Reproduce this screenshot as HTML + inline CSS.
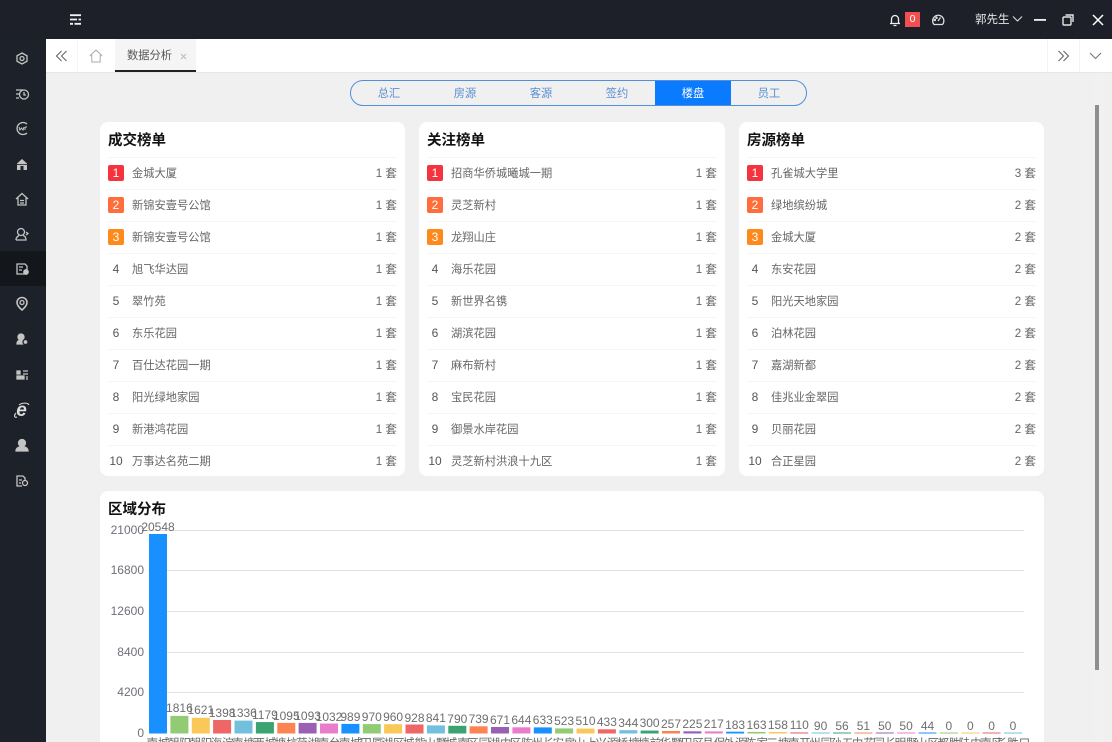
<!DOCTYPE html>
<html lang="zh">
<head>
<meta charset="utf-8">
<title>数据分析</title>
<style>
*{box-sizing:border-box;margin:0;padding:0}
html,body{width:1112px;height:742px;overflow:hidden;background:#f0f0f0}
body{position:relative;font-family:"Liberation Sans","Noto Sans CJK SC",sans-serif;color:#666;filter:blur(.3px)}
.a{position:absolute}
#top{left:0;top:0;width:1112px;height:39px;background:#1d2029}
#side{left:0;top:39px;width:46px;height:703px;background:#1d2129}
#active{left:0;top:251px;width:46px;height:35px;background:#13161b}
#tabs{left:46px;top:39px;width:1066px;height:34px;background:#fff;border-bottom:1px solid #e6e6e6}
#tab{left:115px;top:39px;width:81px;height:33px;background:#f5f5f5;border-bottom:2px solid #222}
.tt{font-size:11.25px;line-height:16px;color:#555}
#seg{left:350px;top:80px;width:457px;height:26px;border:1px solid #4f8fdc;border-radius:13px;overflow:hidden}
#seg span{position:absolute;top:0;height:24px;width:76px;text-align:center;font-size:11.25px;line-height:26px;color:#5a8fd2}
#seg span.on{background:#0a7aff;color:#fff}
.card{position:absolute;background:#fff;border-radius:8px}
.card h3{position:absolute;left:8px;top:9px;font-size:14.5px;line-height:20px;font-weight:bold;color:#111}
.row{position:absolute;left:8px;right:8px;height:32px;border-top:1px solid #f6f6f6;font-size:11.25px;line-height:32px;color:#666}
.n{position:absolute;left:0;top:7px;width:16px;height:16px;text-align:center;line-height:16px;font-size:12px;color:#555}
.n.r1,.n.r2,.n.r3{color:#fff;border-radius:2px}
.r1{background:#f5333f}.r2{background:#ff6d3c}.r3{background:#ff8a1c}
.nm{position:absolute;left:24px;top:0;white-space:nowrap}
.v{position:absolute;right:0;top:0;white-space:nowrap;font-size:11.6px}
#sb{left:1095px;top:105px;width:4px;height:565px;background:#8e8e8e}
#sbt{left:1094px;top:73px;width:10px;height:669px;background:#f1f1f1}
svg{display:block}
</style>
</head>
<body>
<div class="a" id="top"></div>
<div class="a" id="side"></div>
<div class="a" id="active"></div>

<svg class="a" style="left:69px;top:14px" width="13" height="11" viewBox="0 0 13 11" fill="none" stroke="#f2f2f2" stroke-width="1.800"><path d="M1 1.200h11M1 5.500h7M9.500 5.500h2.500M1 9.800h3M5.500 9.800h6.500"/></svg>

<!-- sidebar icons -->
<svg class="a" style="left:0;top:39px" width="46" height="460" viewBox="0 39 46 460" fill="none" stroke="#c4c4c4" stroke-width="1.300">
<path d="M22 53l5 2.800v5.400L22 64l-5-2.800v-5.400z"/><circle cx="22" cy="58.500" r="2"/>
<path d="M16 90h7M16 94h3M16 98h3" /><circle cx="24" cy="94.500" r="4.500"/><path d="M24 92v3h2"/>
<path d="M27 124a6 6 0 1 0 0 9"/><path d="M19 127l1 3 1.500-2 1.500 2 1-3M25 127v3M25 127h2" stroke-width="1"/>
<path d="M17 163.500l5-4.500 5 4.500v6.500H17z" fill="#c4c4c4" stroke="none"/><path d="M16 164.500h12" stroke="#1d2129" stroke-width=".8"/><path d="M20.500 166h3v4h-3z" fill="#1d2129" stroke="none"/>
<path d="M16 199l6-5.500 6 5.500M18 198v7h8v-7M20 200.500h4M20 203h4"/>
<circle cx="21" cy="232" r="3.500"/><path d="M16 240c0-3 2-4 3-4.500M23 235.500c2 .5 3 2 3 4.500H16M26 232l2 1.500-2 1.500"/>
<path d="M17 264h8l2 2v5h-1v3h-9z"/><path d="M19 267h4M19 270h3"/><circle cx="26" cy="272" r="2.200" fill="#c4c4c4"/>
<path d="M22 310c-3-2.500-5-5-5-7.500a5 5 0 0 1 10 0c0 2.500-2 5-5 7.500z" stroke-width="1.600"/><circle cx="22" cy="302.500" r="2"/>
<circle cx="21" cy="337" r="3" fill="#c4c4c4"/><path d="M17 344c0-3 2-4 4-4s2 1 2 4z" fill="#c4c4c4"/><circle cx="25.500" cy="342" r="2.500" fill="#c4c4c4" stroke="#1d2129"/>
<path d="M17 371h3v3h-3zM17 376h7v3h-7z" fill="#c4c4c4"/><path d="M23 371h5M23 374h5M26 377h2M26 379h2"/>
<text x="21.500" y="416" font-family="Liberation Sans" font-style="italic" font-weight="bold" font-size="19" text-anchor="middle" fill="#dcdcdc" stroke="none">e</text><path d="M16 413c-2.500 3-1.500 5 1 4M19 405c3-2.500 9-2.500 10 0" stroke-width="1.100" stroke="#dcdcdc"/>
<circle cx="22" cy="443" r="3.500" fill="#c4c4c4"/><path d="M16 451c0-3 3-4.500 6-4.500s6 1.500 6 4.500z" fill="#c4c4c4"/>
<path d="M23 476h-6v10h5M23 476l2 2v2"/><circle cx="25" cy="483" r="2.500"/><path d="M19 480h3M19 483h2"/>
</svg>

<!-- top right -->
<svg class="a" style="left:888px;top:13px" width="14" height="14" viewBox="0 0 14 14" fill="none" stroke="#eee" stroke-width="1.300"><path d="M2 10.500h10M3.500 10.500V6a3.500 3.500 0 0 1 7 0v4.500M5.500 12.500h3"/></svg>
<div class="a" style="left:905px;top:12px;width:15px;height:15px;background:#f05050;color:#fff;font-size:10.500px;line-height:15px;text-align:center">0</div>
<svg class="a" style="left:931px;top:14px" width="14" height="12" viewBox="0 0 14 12" fill="none" stroke="#ddd" stroke-width="1.300"><path d="M3 10.500a5.600 5.600 0 1 1 8.500 0z"/><path d="M7 7l2.500-3.500" /><circle cx="3.800" cy="6" r=".6" fill="#ddd"/><circle cx="5.500" cy="3.800" r=".6" fill="#ddd"/></svg>
<div class="a" style="left:975px;top:12px;font-size:11.500px;line-height:16px;color:#e6e6e6;white-space:nowrap">郭先生</div>
<svg class="a" style="left:1012px;top:15px" width="11" height="8" viewBox="0 0 11 8" fill="none" stroke="#ddd" stroke-width="1.100"><path d="M1 1.500l4.500 4.500 4.500-4.500"/></svg>
<svg class="a" style="left:1034px;top:19px" width="12" height="3"><rect width="12" height="1.800" fill="#f2f2f2"/></svg>
<svg class="a" style="left:1062px;top:14px" width="12" height="12" viewBox="0 0 12 12" fill="none" stroke="#e6e6e6" stroke-width="1.400"><rect x="1" y="3" width="8" height="8" rx="1"/><path d="M3.500 1h7.500v7"/></svg>
<svg class="a" style="left:1092px;top:14px" width="12" height="12" viewBox="0 0 12 12" fill="none" stroke="#fff" stroke-width="1.500"><path d="M1 1l10 10M11 1L1 11"/></svg>

<!-- tab bar -->
<div class="a" id="tabs"></div>
<div class="a" style="left:77px;top:39px;width:1px;height:33px;background:#f5f5f5"></div>
<div class="a" id="tab"></div>
<svg class="a" style="left:55px;top:50px" width="13" height="12" viewBox="0 0 13 12" fill="none" stroke="#666" stroke-width="1.100"><path d="M6.500 1l-5 5 5 5M11.500 1l-5 5 5 5"/></svg>
<svg class="a" style="left:89px;top:49px" width="14" height="14" viewBox="0 0 14 14" fill="none" stroke="#aaa" stroke-width="1"><path d="M.8 7L7 1l6.200 6M2.800 6v7h8.400V6"/></svg>
<div class="a tt" style="left:127px;top:48px;white-space:nowrap">数据分析</div>
<svg class="a" style="left:180px;top:53px" width="7" height="7" viewBox="0 0 7 7" fill="none" stroke="#bbb" stroke-width="1"><path d="M1 1l5 5M6 1L1 6"/></svg>
<div class="a" style="left:1047px;top:39px;width:1px;height:33px;background:#f3f3f3"></div>
<div class="a" style="left:1079px;top:39px;width:1px;height:33px;background:#f3f3f3"></div>
<svg class="a" style="left:1057px;top:50px" width="13" height="12" viewBox="0 0 13 12" fill="none" stroke="#666" stroke-width="1.100"><path d="M1.500 1l5 5-5 5M6.500 1l5 5-5 5"/></svg>
<svg class="a" style="left:1089px;top:52px" width="13" height="8" viewBox="0 0 13 8" fill="none" stroke="#777" stroke-width="1.100"><path d="M1 1l5.500 5.500L12 1"/></svg>

<div class="a" id="sbt"></div>
<div class="a" id="sb"></div>

<!-- segmented control -->
<div class="a" id="seg">
<span style="left:0">总汇</span><span style="left:76px">房源</span><span style="left:152px">客源</span><span style="left:228px">签约</span><span class="on" style="left:304px">楼盘</span><span style="left:380px">员工</span>
</div>

<!-- card 1 -->
<div class="card" style="left:100px;top:122px;width:305px;height:354px">
<h3>成交榜单</h3>
<div class="row" style="top:35px"><span class="n r1">1</span><span class="nm">金城大厦</span><span class="v">1 套</span></div>
<div class="row" style="top:67px"><span class="n r2">2</span><span class="nm">新锦安壹号公馆</span><span class="v">1 套</span></div>
<div class="row" style="top:99px"><span class="n r3">3</span><span class="nm">新锦安壹号公馆</span><span class="v">1 套</span></div>
<div class="row" style="top:131px"><span class="n">4</span><span class="nm">旭飞华达园</span><span class="v">1 套</span></div>
<div class="row" style="top:163px"><span class="n">5</span><span class="nm">翠竹苑</span><span class="v">1 套</span></div>
<div class="row" style="top:195px"><span class="n">6</span><span class="nm">东乐花园</span><span class="v">1 套</span></div>
<div class="row" style="top:227px"><span class="n">7</span><span class="nm">百仕达花园一期</span><span class="v">1 套</span></div>
<div class="row" style="top:259px"><span class="n">8</span><span class="nm">阳光绿地家园</span><span class="v">1 套</span></div>
<div class="row" style="top:291px"><span class="n">9</span><span class="nm">新港鸿花园</span><span class="v">1 套</span></div>
<div class="row" style="top:323px"><span class="n">10</span><span class="nm">万事达名苑二期</span><span class="v">1 套</span></div>
</div>

<!-- card 2 -->
<div class="card" style="left:419px;top:122px;width:306px;height:354px">
<h3>关注榜单</h3>
<div class="row" style="top:35px"><span class="n r1">1</span><span class="nm">招商华侨城曦城一期</span><span class="v">1 套</span></div>
<div class="row" style="top:67px"><span class="n r2">2</span><span class="nm">灵芝新村</span><span class="v">1 套</span></div>
<div class="row" style="top:99px"><span class="n r3">3</span><span class="nm">龙翔山庄</span><span class="v">1 套</span></div>
<div class="row" style="top:131px"><span class="n">4</span><span class="nm">海乐花园</span><span class="v">1 套</span></div>
<div class="row" style="top:163px"><span class="n">5</span><span class="nm">新世界名镌</span><span class="v">1 套</span></div>
<div class="row" style="top:195px"><span class="n">6</span><span class="nm">湖滨花园</span><span class="v">1 套</span></div>
<div class="row" style="top:227px"><span class="n">7</span><span class="nm">麻布新村</span><span class="v">1 套</span></div>
<div class="row" style="top:259px"><span class="n">8</span><span class="nm">宝民花园</span><span class="v">1 套</span></div>
<div class="row" style="top:291px"><span class="n">9</span><span class="nm">御景水岸花园</span><span class="v">1 套</span></div>
<div class="row" style="top:323px"><span class="n">10</span><span class="nm">灵芝新村洪浪十九区</span><span class="v">1 套</span></div>
</div>

<!-- card 3 -->
<div class="card" style="left:739px;top:122px;width:305px;height:354px">
<h3>房源榜单</h3>
<div class="row" style="top:35px"><span class="n r1">1</span><span class="nm">孔雀城大学里</span><span class="v">3 套</span></div>
<div class="row" style="top:67px"><span class="n r2">2</span><span class="nm">绿地缤纷城</span><span class="v">2 套</span></div>
<div class="row" style="top:99px"><span class="n r3">3</span><span class="nm">金城大厦</span><span class="v">2 套</span></div>
<div class="row" style="top:131px"><span class="n">4</span><span class="nm">东安花园</span><span class="v">2 套</span></div>
<div class="row" style="top:163px"><span class="n">5</span><span class="nm">阳光天地家园</span><span class="v">2 套</span></div>
<div class="row" style="top:195px"><span class="n">6</span><span class="nm">泊林花园</span><span class="v">2 套</span></div>
<div class="row" style="top:227px"><span class="n">7</span><span class="nm">嘉湖新都</span><span class="v">2 套</span></div>
<div class="row" style="top:259px"><span class="n">8</span><span class="nm">佳兆业金翠园</span><span class="v">2 套</span></div>
<div class="row" style="top:291px"><span class="n">9</span><span class="nm">贝丽花园</span><span class="v">2 套</span></div>
<div class="row" style="top:323px"><span class="n">10</span><span class="nm">合正星园</span><span class="v">2 套</span></div>
</div>

<!-- chart card -->
<div class="card" style="left:100px;top:491px;width:944px;height:260px"><h3>区域分布</h3></div>

<svg class="a" style="left:0;top:0" width="1112" height="742" viewBox="0 0 1112 742">
<g stroke="#e2e2e2" stroke-width="1">
<path d="M148 530.500H1024M148 570.500H1024M148 611.500H1024M148 652.500H1024M148 692.500H1024"/>
</g>
<g font-family="Liberation Sans" font-size="12" fill="#6e7079" text-anchor="end">
<text x="144" y="534">21000</text><text x="144" y="574">16800</text><text x="144" y="615">12600</text><text x="144" y="656">8400</text><text x="144" y="696">4200</text><text x="144" y="737">0</text>
</g>
<g>
<rect x="149" y="534" width="18" height="199.500" fill="#1890ff"/>
<rect x="170.400" y="715.900" width="18" height="17.600" fill="#91cc75"/>
<rect x="191.800" y="717.800" width="18" height="15.700" fill="#fac858"/>
<rect x="213.100" y="720" width="18" height="13.500" fill="#ee6666"/>
<rect x="234.500" y="720.600" width="18" height="12.900" fill="#73c0de"/>
<rect x="255.900" y="722.100" width="18" height="11.400" fill="#3ba272"/>
<rect x="277.300" y="722.900" width="18" height="10.600" fill="#fc8452"/>
<rect x="298.600" y="722.900" width="18" height="10.600" fill="#9a60b4"/>
<rect x="320" y="723.500" width="18" height="10" fill="#ea7ccc"/>
<rect x="341.400" y="723.900" width="18" height="9.600" fill="#1890ff"/>
<rect x="362.800" y="724.100" width="18" height="9.400" fill="#91cc75"/>
<rect x="384.100" y="724.200" width="18" height="9.300" fill="#fac858"/>
<rect x="405.500" y="724.500" width="18" height="9" fill="#ee6666"/>
<rect x="426.900" y="725.400" width="18" height="8.100" fill="#73c0de"/>
<rect x="448.300" y="725.800" width="18" height="7.700" fill="#3ba272"/>
<rect x="469.600" y="726.300" width="18" height="7.200" fill="#fc8452"/>
<rect x="491" y="727" width="18" height="6.500" fill="#9a60b4"/>
<rect x="512.400" y="727.300" width="18" height="6.200" fill="#ea7ccc"/>
<rect x="533.800" y="727.400" width="18" height="6.100" fill="#1890ff"/>
<rect x="555.100" y="728.400" width="18" height="5.100" fill="#91cc75"/>
<rect x="576.500" y="728.600" width="18" height="4.900" fill="#fac858"/>
<rect x="597.900" y="729.300" width="18" height="4.200" fill="#ee6666"/>
<rect x="619.300" y="730.200" width="18" height="3.300" fill="#73c0de"/>
<rect x="640.600" y="730.600" width="18" height="2.900" fill="#3ba272"/>
<rect x="662" y="731" width="18" height="2.500" fill="#fc8452"/>
<rect x="683.400" y="731.300" width="18" height="2.200" fill="#9a60b4"/>
<rect x="704.800" y="731.400" width="18" height="2.100" fill="#ea7ccc"/>
<rect x="726.100" y="731.700" width="18" height="1.800" fill="#1890ff"/>
<rect x="747.500" y="731.900" width="18" height="1.600" fill="#91cc75"/>
<rect x="768.900" y="732" width="18" height="1.500" fill="#fac858"/>
<rect x="790.300" y="732.400" width="18" height="1.100" fill="#ee6666"/>
<rect x="811.600" y="732.500" width="18" height="1" fill="#73c0de"/>
<rect x="833" y="732.500" width="18" height="1" fill="#3ba272"/>
<rect x="854.400" y="732.500" width="18" height="1" fill="#fc8452"/>
<rect x="875.800" y="732.500" width="18" height="1" fill="#9a60b4"/>
<rect x="897.100" y="732.500" width="18" height="1" fill="#ea7ccc"/>
<rect x="918.500" y="732.500" width="18" height="1" fill="#1890ff"/>
<rect x="939.900" y="732.500" width="18" height="1" fill="#91cc75"/>
<rect x="961.300" y="732.500" width="18" height="1" fill="#fac858"/>
<rect x="982.600" y="732.500" width="18" height="1" fill="#ee6666"/>
<rect x="1004" y="732.500" width="18" height="1" fill="#73c0de"/>
</g>
<g font-family="Liberation Sans" font-size="12" fill="#6e6e6e" text-anchor="middle">
<text x="158" y="531">20548</text>
<text x="179.400" y="712">1816</text>
<text x="200.800" y="714">1621</text>
<text x="222.100" y="717">1398</text>
<text x="243.500" y="717">1336</text>
<text x="264.900" y="719">1179</text>
<text x="286.300" y="720">1095</text>
<text x="307.600" y="720">1093</text>
<text x="329" y="721">1032</text>
<text x="350.400" y="721">989</text>
<text x="371.800" y="721">970</text>
<text x="393.100" y="721">960</text>
<text x="414.500" y="722">928</text>
<text x="435.900" y="722">841</text>
<text x="457.300" y="723">790</text>
<text x="478.600" y="723">739</text>
<text x="500" y="724">671</text>
<text x="521.400" y="724">644</text>
<text x="542.800" y="724">633</text>
<text x="564.100" y="725">523</text>
<text x="585.500" y="725">510</text>
<text x="606.900" y="726">433</text>
<text x="628.300" y="727">344</text>
<text x="649.600" y="727">300</text>
<text x="671" y="728">257</text>
<text x="692.400" y="728">225</text>
<text x="713.800" y="728">217</text>
<text x="735.100" y="729">183</text>
<text x="756.500" y="729">163</text>
<text x="777.900" y="729">158</text>
<text x="799.300" y="729">110</text>
<text x="820.600" y="730">90</text>
<text x="842" y="730">56</text>
<text x="863.400" y="730">51</text>
<text x="884.800" y="730">50</text>
<text x="906.100" y="730">50</text>
<text x="927.500" y="730">44</text>
<text x="948.900" y="730">0</text>
<text x="970.300" y="730">0</text>
<text x="991.600" y="730">0</text>
<text x="1013" y="730">0</text>
</g>
<g font-family="Liberation Sans,Noto Sans CJK SC,sans-serif" font-size="11.500" fill="#666" text-anchor="middle">
<text x="158" y="747">南城</text><text x="179.400" y="747">朝阳</text><text x="200.800" y="747">朝阳</text><text x="222.100" y="747">海淀</text><text x="243.500" y="747">南塘</text><text x="264.900" y="747">西城</text><text x="286.300" y="747">塘坑</text><text x="307.600" y="747">荷湖</text><text x="329" y="747">南台</text><text x="350.400" y="747">南城</text><text x="371.800" y="747">田厦</text><text x="393.100" y="747">湖区</text><text x="414.500" y="747">城熊</text><text x="435.900" y="747">山墅</text><text x="457.300" y="747">城南</text><text x="478.600" y="747">区园</text><text x="500" y="747">湖中</text><text x="521.400" y="747">区陈</text><text x="542.800" y="747">州长</text><text x="564.100" y="747">安房</text><text x="585.500" y="747">山上</text><text x="606.900" y="747">兴源</text><text x="628.300" y="747">桥塘</text><text x="649.600" y="747">塘前</text><text x="671" y="747">华墅</text><text x="692.400" y="747">田区</text><text x="713.800" y="747">县保</text><text x="735.100" y="747">外源</text><text x="756.500" y="747">陈家</text><text x="777.900" y="747">三塘</text><text x="799.300" y="747">南开</text><text x="820.600" y="747">州园</text><text x="842" y="747">孙五</text><text x="863.400" y="747">中花</text><text x="884.800" y="747">园长</text><text x="906.100" y="747">明野</text><text x="927.500" y="747">山区</text><text x="948.900" y="747">都胜</text><text x="970.300" y="747">陆中</text><text x="991.600" y="747">南区</text><text x="1013" y="747">长胜口</text>
</g>
</svg>
</body>
</html>
